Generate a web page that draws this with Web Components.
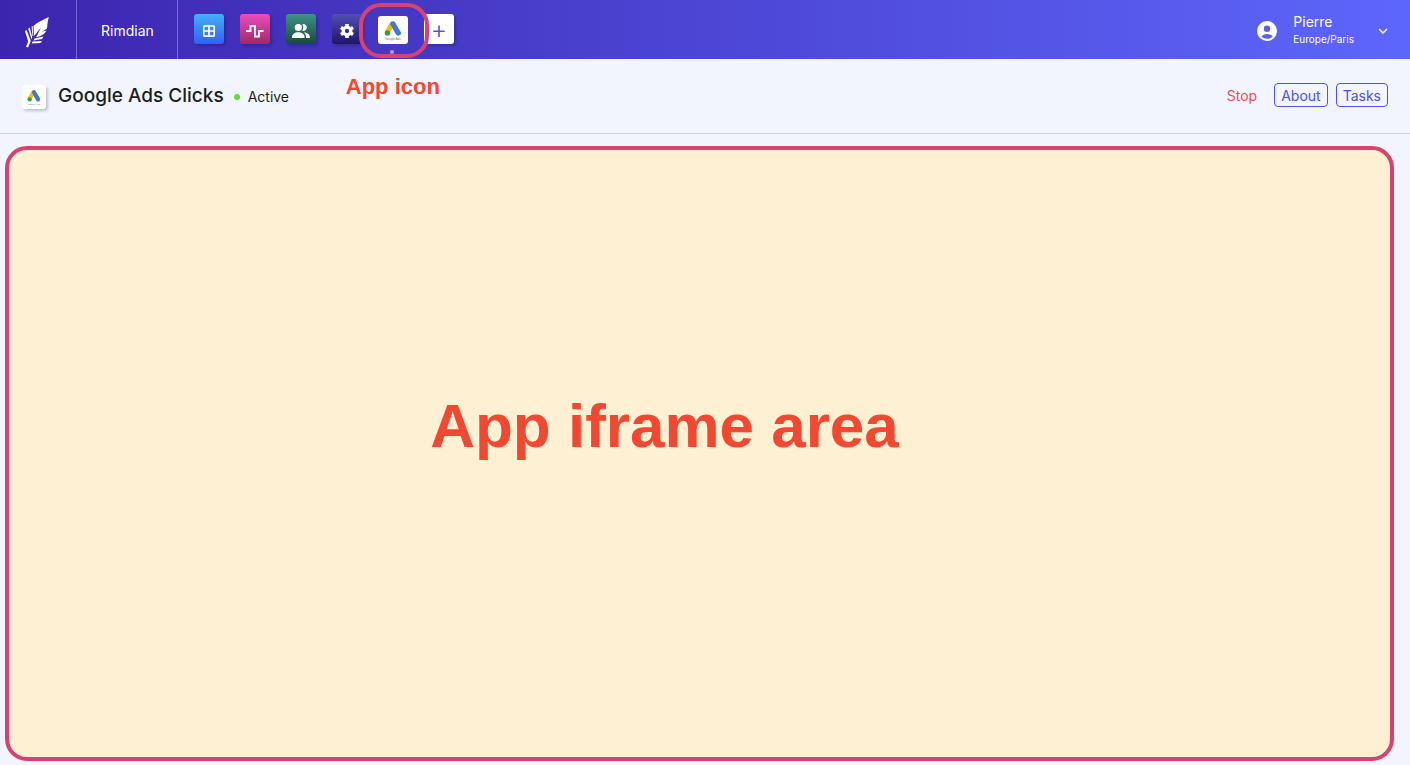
<!DOCTYPE html>
<html lang="en">
<head>
<meta charset="utf-8">
<meta name="viewport" content="width=device-width, initial-scale=1">
<title>Rimdian - Google Ads Clicks</title>
<style>
  html, body { margin: 0; }
  body { font: 14px/22px Inter, "Liberation Sans", sans-serif; color: #1c1d21; background: #f2f5fd; --note: #f24730; --ring: #d9426f; --primary: #4e50ea; }
</style>
</head>
<body>
<rimdian-app></rimdian-app>

<script>
const define = (name, html) => {
  const tpl = document.createElement('template');
  tpl.innerHTML = html;
  customElements.define(name, class extends HTMLElement {
    constructor() {
      super();
      this.attachShadow({ mode: 'open' }).append(tpl.content.cloneNode(true));
    }
  });
};

define('ads-logo', `
<style>:host { display: block; } svg { display: block; width: 100%; height: 100%; } text { font: 3px "Liberation Sans", sans-serif; }</style>
<svg viewBox="0 0 30 28" role="img" aria-label="Google Ads">
  <path d="M14 8 L9.500 16" stroke="#fbbc04" stroke-width="5" stroke-linecap="round"/>
  <path d="M15 8 L20.200 17" stroke="#4377d3" stroke-width="5.400" stroke-linecap="round"/>
  <circle cx="9.500" cy="17" r="2.800" fill="#34a04b"/>
  <text x="15" y="24" text-anchor="middle" fill="#6f7276">Google Ads</text>
</svg>`);

define('app-tile', `
<style>
  :host { display: block; }
  button { display: grid; place-items: center; width: 30px; height: 30px; padding: 0; border: 0; border-radius: 3px; color: #fff; background: var(--tile, #fff); box-shadow: 2px 2px 3px #0003; cursor: pointer; }
  ::slotted(svg) { display: block; width: 20px; height: 20px; margin-top: 4px; }
</style>
<button type="button"><slot></slot></button>`);

define('active-app', `
<style>
  :host { display: block; position: relative; }
  button { display: block; width: 30px; height: 28px; margin-top: 2px; padding: 0; border: 0; border-radius: 3px; background: #fff; cursor: pointer; }
  ads-logo { width: 30px; height: 28px; }
  .ring { position: absolute; z-index: 1; left: -19px; top: -11px; width: 70px; height: 55px; box-sizing: border-box; border: 4px solid var(--ring); border-radius: 22px; pointer-events: none; }
  .dot { position: absolute; left: 12px; top: 36px; width: 4px; height: 4px; border-radius: 50%; background: #a7a2e8; }
  .note { position: absolute; left: -32px; top: 60px; white-space: nowrap; font: bold 22px/26px "Liberation Sans", sans-serif; color: var(--note); }
</style>
<button type="button" aria-label="Google Ads Clicks"><ads-logo></ads-logo></button>
<span class="dot"></span><span class="ring"></span><span class="note">App icon</span>`);

define('user-menu', `
<style>
  :host { display: block; }
  button { display: flex; align-items: center; padding: 0; border: 0; background: none; color: #fff; font: inherit; text-align: left; cursor: pointer; }
  .avatar { width: 20px; height: 20px; margin: 4px 16px 0 0; }
  .chevron { width: 10px; height: 6px; margin: 4px 0 0 24px; }
  b, small { display: block; font-weight: 400; }
  b { line-height: 20px; }
  small { font-size: 10px; line-height: 14px; }
</style>
<button type="button">
  <svg class="avatar" viewBox="0 0 20 20"><path fill="#fff" fill-rule="evenodd" d="M10 0a10 10 0 1 0 0 20 10 10 0 0 0 0-20Zm0 4.500a3.200 3.200 0 1 1 0 6.400A3.200 3.200 0 0 1 10 4.500Zm0 8.500c2.300 0 4.500 1 5.600 2.300-1.400 1.700-3.400 2.500-5.600 2.500s-4.200-.8-5.600-2.500c1.100-1.300 3.300-2.300 5.600-2.300Z"/></svg>
  <span><b>Pierre</b><small>Europe/Paris</small></span>
  <svg class="chevron" viewBox="0 0 10 6"><path d="M1 1l4 4 4-4" fill="none" stroke="#fff" stroke-width="1.400"/></svg>
</button>`);

define('top-bar', `
<style>
  :host { display: flex; align-items: stretch; height: 59px; color: #fff; background: linear-gradient(90deg, #3c25ae, #5d66fb); }
  a { display: flex; align-items: center; color: inherit; text-decoration: none; border-right: 1px solid #ffffff4d; box-sizing: border-box; }
  .brand { width: 77px; padding: 4px 0 0 24px; }
  .brand svg { width: 26px; height: 32px; }
  .org { padding: 3px 23px 0 24px; }
  nav { display: flex; gap: 16px; padding: 14px 16px 0; }
  user-menu { margin: 12px 22px 0 auto; }
</style>
<a class="brand" href="#" aria-label="Home">
  <svg viewBox="0 0 26 32" fill="#fff">
    <path d="M24.800 1C21 3.300 14 5.500 9.500 10L10 20 17 11.500 12 21.500 16.500 20 20.500 17.500 22.500 14.500 18 15.800 23 12.500C23.300 8 24 4 24.800 1Z"/>
    <path d="M4.200 12.700 5.800 11.500 8.200 21.500 7.600 23.500ZM7.600 10.500 8.600 9.800 9.300 20 8.500 20Z"/>
    <path d="M1 15 2.600 14 6.800 25 4 31.500 2 30.800 4.200 25.500Z"/>
    <path d="M10.500 22.500 19.500 20.500 18 23 9.500 24.500ZM8.500 25.500 18 25 16.500 27 7.800 27.500Z"/>
  </svg>
</a>
<a class="org" href="#">Rimdian</a>
<nav aria-label="Apps">
  <app-tile style="--tile:linear-gradient(#44b0fb,#305ffa)"><svg viewBox="0 0 20 20" fill="none" stroke="#fff" stroke-width="1.700" aria-label="Dashboards"><rect x="4.800" y="4.800" width="10.400" height="10.400" rx="1"/><path d="M10 5v10M5 10h10"/></svg></app-tile>
  <app-tile style="--tile:linear-gradient(#ea4dbd,#a22868)"><svg viewBox="0 0 20 20" fill="none" stroke="#fff" stroke-width="1.800" aria-label="Activity"><path d="M1 10h4.500V4.800H10v10.700h4V10h4.500"/></svg></app-tile>
  <app-tile style="--tile:linear-gradient(#3d9488,#1b493e)"><svg viewBox="0 0 20 20" fill="#fff" aria-label="Users"><circle cx="7.300" cy="6.500" r="3.600"/><path d="M1 17v-1c0-3 3-4.800 6.300-4.800s6.300 1.800 6.300 4.800v1ZM11.300 3.300a3.400 3.400 0 1 1 0 6.400c1.300-2 1.300-4.400 0-6.400ZM13 11.400c3.200 0 5.800 1.700 5.800 4.600v1H15v-1c0-1.800-.7-3.500-2-4.600Z"/></svg></app-tile>
  <app-tile style="--tile:linear-gradient(#514eb4,#201568)"><svg viewBox="0 0 20 20" fill="none" stroke="#fff" aria-label="Settings"><circle cx="10" cy="10" r="3.800" stroke-width="3.300"/><path stroke-width="3.600" d="M10 3v3M10 14v3M3.940 6.500l2.600 1.500M13.460 12l2.600 1.500M3.940 13.500l2.600-1.500M13.460 8l2.600-1.500"/></svg></app-tile>
  <active-app></active-app>
  <app-tile><svg viewBox="0 0 20 20" fill="none" stroke="#4e50ea" stroke-width="1.600" aria-label="Add app"><path d="M10 4.500v11.500M4.200 10.200h11.500"/></svg></app-tile>
</nav>
<user-menu></user-menu>`);

define('app-header', `
<style>
  :host { display: flex; align-items: center; height: 74px; padding: 0 22px; border-bottom: 1px solid #cfd2d9; }
  .icon { display: grid; place-items: center; width: 24px; height: 24px; margin: 2px 12px 0 0; border-radius: 3px; background: #fff; box-shadow: 2px 2px 3px #0003; }
  ads-logo { width: 24px; height: 22px; }
  h1 { margin: 0 10px 0 0; font-size: 19px; line-height: 28px; font-weight: 500; }
  .status { display: flex; align-items: center; gap: 8px; margin-top: 2px; }
  .status i { width: 6px; height: 6px; border-radius: 50%; background: #68d932; }
  .actions { display: flex; gap: 8px; margin: 0 0 2px auto; }
  button { height: 24px; padding: 2px 6px 0; box-sizing: border-box; border: 1px solid var(--primary); border-radius: 4px; background: none; color: var(--primary); font: inherit; line-height: 20px; cursor: pointer; }
  .stop { padding: 2px 8px 0; border-color: transparent; color: #f04b4b; }
</style>
<span class="icon"><ads-logo></ads-logo></span>
<h1>Google Ads Clicks</h1>
<span class="status"><i></i>Active</span>
<div class="actions"><button class="stop" type="button">Stop</button><button type="button">About</button><button type="button">Tasks</button></div>`);

define('iframe-area', `
<style>
  :host { display: flex; justify-content: center; align-items: center; box-sizing: border-box; padding: 0 70px 56px 0; border: 4px solid var(--ring); border-radius: 22px; background: #fef0d2; }
  p { margin: 0; font: bold 62px/72px "Liberation Sans", sans-serif; color: var(--note); }
</style>
<p><slot></slot></p>`);

define('rimdian-app', `
<style>
  :host { display: flex; flex-direction: column; min-height: 100vh; }
  main { display: flex; flex: 1; padding: 12px 16px 4px 5px; }
  iframe-area { flex: 1; }
</style>
<top-bar></top-bar>
<app-header></app-header>
<main><iframe-area>App iframe area</iframe-area></main>`);
</script>
</body>
</html>
